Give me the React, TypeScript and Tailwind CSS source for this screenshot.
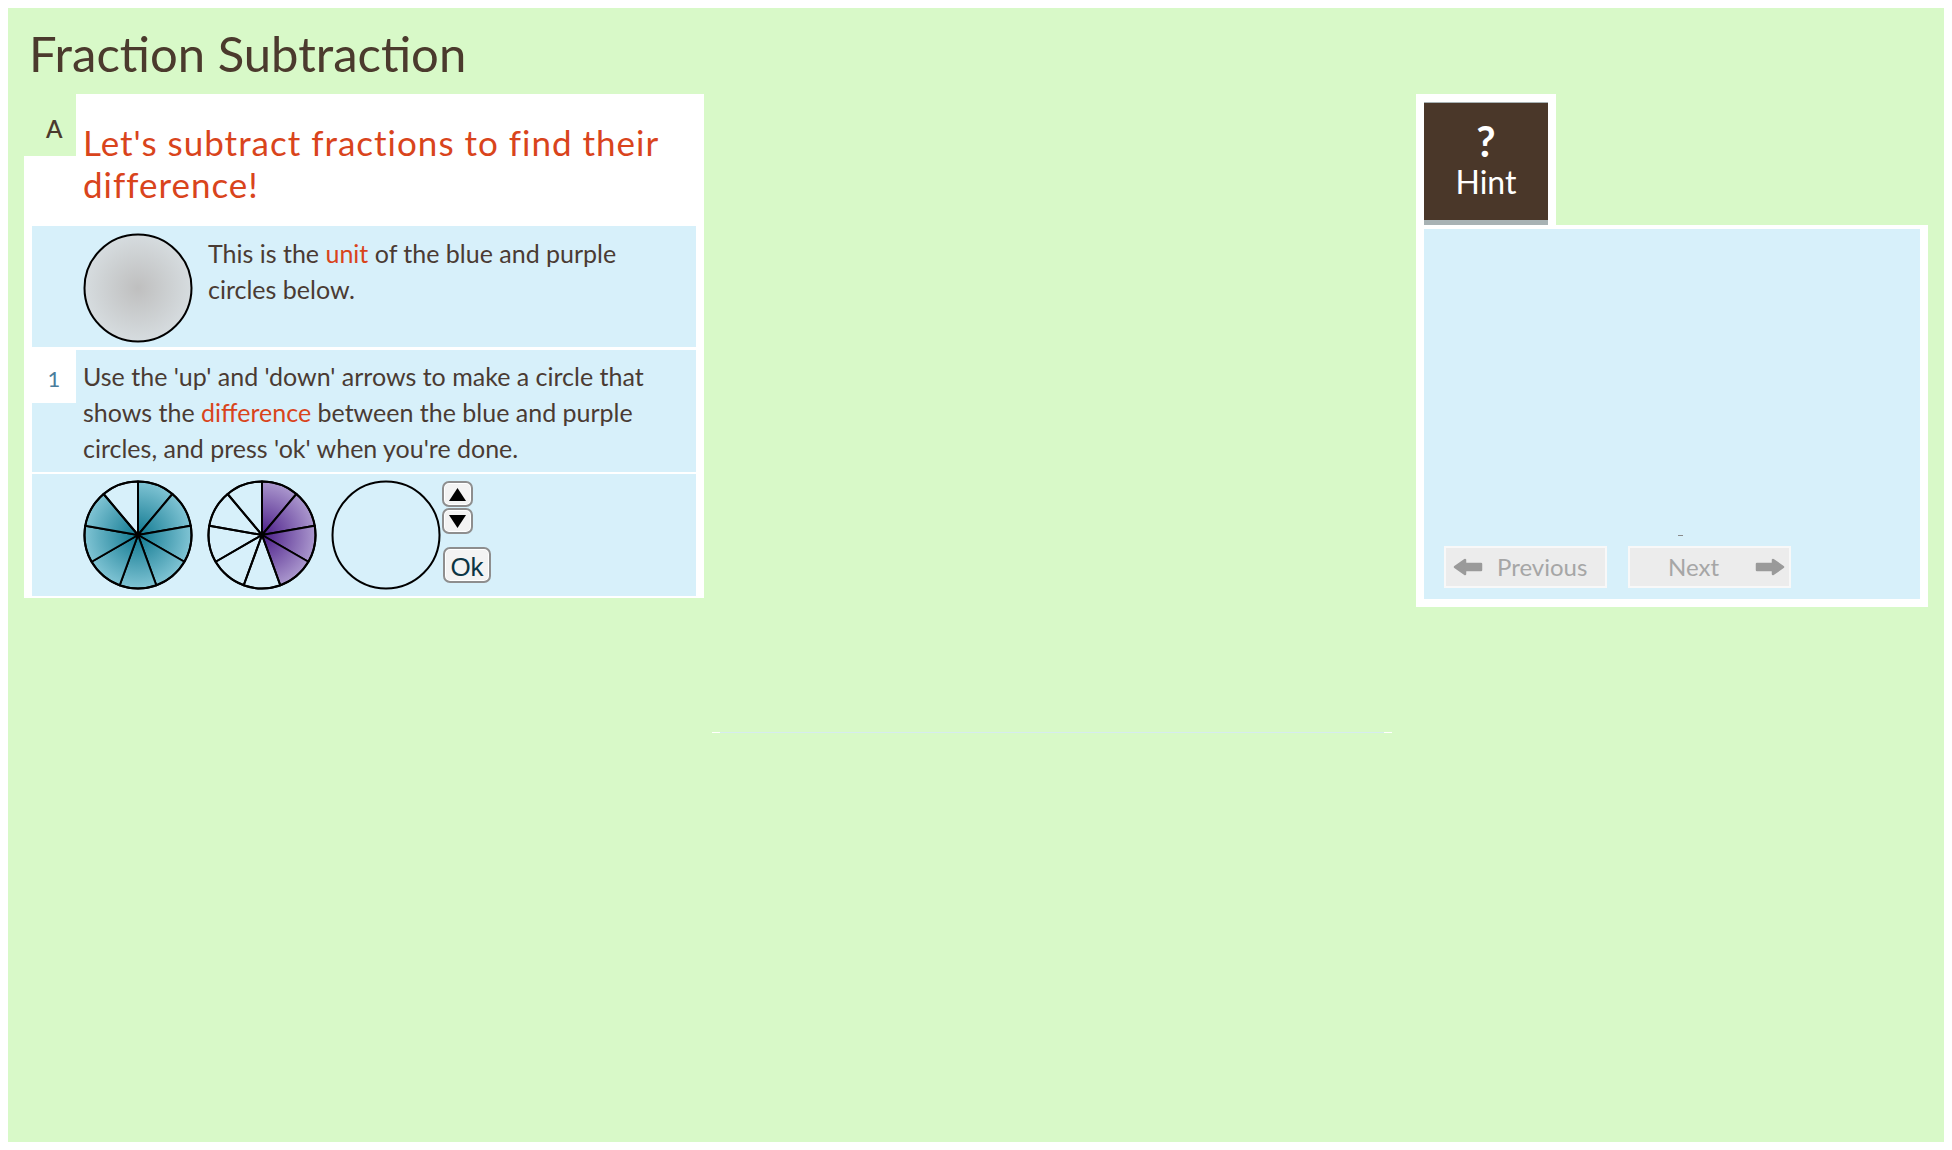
const font = { fontFamily: "Lato, 'Noto Sans', sans-serif" }

// one pie circle split into equal slices; the first `filled` slices (clockwise from top) are coloured
function Pie({ id, slices, filled, inner, outer }: { id: string; slices: number; filled: number; inner: string; outer: string }) {
  const c = 55
  const r = 53.5
  const pt = (k: number) => {
    const a = (k * 2 * Math.PI) / slices
    return [c + r * Math.sin(a), c - r * Math.cos(a)]
  }
  const wedges = []
  for (let k = 0; k < slices; k++) {
    const [x1, y1] = pt(k)
    const [x2, y2] = pt(k + 1)
    wedges.push(
      <path
        key={k}
        d={`M${c},${c} L${x1},${y1} A${r},${r} 0 0 1 ${x2},${y2} Z`}
        fill={k < filled ? `url(#${id})` : "none"}
        stroke="#000"
        strokeWidth={2}
        strokeLinejoin="round"
      />
    )
  }
  return (
    <svg width={110} height={110} viewBox="0 0 110 110" className="shrink-0">
      <defs>
        <radialGradient id={id} gradientUnits="userSpaceOnUse" cx={c} cy={c} r={r}>
          <stop offset="0%" stopColor={inner} />
          <stop offset="100%" stopColor={outer} />
        </radialGradient>
      </defs>
      {wedges}
      <circle cx={c} cy={c} r={r} fill="none" stroke="#000" strokeWidth={2} />
    </svg>
  )
}

function PlainCircle({ id, inner, outer }: { id?: string; inner?: string; outer?: string }) {
  return (
    <svg width={110} height={110} viewBox="0 0 110 110" className="shrink-0">
      {id && (
        <defs>
          <radialGradient id={id} gradientUnits="userSpaceOnUse" cx={55} cy={55} r={53.5}>
            <stop offset="0%" stopColor={inner} />
            <stop offset="100%" stopColor={outer} />
          </radialGradient>
        </defs>
      )}
      <circle cx={55} cy={55} r={53.5} fill={id ? `url(#${id})` : "none"} stroke="#000" strokeWidth={2} />
    </svg>
  )
}

function SpinButton({ up }: { up?: boolean }) {
  return (
    <button className="flex h-[26px] w-[31px] items-center justify-center rounded-[7px] border-2 border-[#8e8e8e] bg-[#f3f3f3] shadow-[inset_0_0_0_1px_#ffffff]">
      <svg width={17} height={13} viewBox="0 0 17 13">
        {up ? <polygon points="8.5,0 17,13 0,13" fill="#000" /> : <polygon points="0,0 17,0 8.5,13" fill="#000" />}
      </svg>
    </button>
  )
}

function NavArrow({ right }: { right?: boolean }) {
  return (
    <svg width={30} height={18} viewBox="0 0 30 18" className={right ? "shrink-0 -scale-x-100" : "shrink-0"}>
      <path
        d="M2,9 L12,2 L12,6 L28,6 L28,12 L12,12 L12,16 Z"
        fill="#9a9a9a"
        stroke="#9a9a9a"
        strokeWidth={2.5}
        strokeLinejoin="round"
      />
    </svg>
  )
}

export default function App() {
  return (
    <div className="min-h-screen bg-white p-2" style={font}>
      <div className="h-[1134px] bg-[#d8f9c8] px-4 pt-[21px]">
        <h1 className="ml-[5px] text-[49px] leading-[48px] text-[#4b3a2d]">Fraction Subtraction</h1>

        <div className="mt-[17px] flex items-start">
          {/* Left: problem card */}
          <div className="w-[680px]">
            <div className="flex">
              <div className="flex w-[52px] flex-col">
                <div className="h-[62px] pl-[22px] pt-[23px] text-[24px] font-semibold leading-[24px] text-[#4b3a2d]">A</div>
                <div className="flex-1 bg-white" />
              </div>
              <div className="flex-1 bg-white pb-[21px] pl-[7px] pr-4 pt-[27px] text-[35px] leading-[42px] tracking-[1px] text-[#d9441c]">
                Let's subtract fractions to find their difference!
              </div>
            </div>

            <div className="bg-white px-2 pb-[2px] text-[25px] leading-[36px] text-[#4a3b33]">
              <div className="flex h-[121px] bg-[#d7f0fa] pl-[51px] pt-[7px]">
                <PlainCircle id="unitGrad" inner="#bfbfbf" outer="#d6dcdf" />
                <p className="ml-[15px] mt-[2px] w-[450px]">
                  This is the <span className="text-[#d9441c]">unit</span> of the blue and purple circles below.
                </p>
              </div>

              <div className="mt-[3px] flex h-[122px] bg-[#d7f0fa]">
                <div className="w-[44px] shrink-0">
                  <div className="flex h-[53px] justify-center bg-white pt-[18px] text-[22px] leading-[22px] text-[#4a7d9c]">1</div>
                </div>
                <p className="w-[600px] pl-[7px] pt-[8px]">
                  Use the 'up' and 'down' arrows to make a circle that shows the{" "}
                  <span className="text-[#d9441c]">difference</span> between the blue and purple circles, and press 'ok' when you're done.
                </p>
              </div>

              <div className="mt-[2px] flex h-[122px] bg-[#d7f0fa] pl-[51px] pt-[6px]">
                <div className="flex gap-[14px]">
                  <Pie id="blueGrad" slices={9} filled={8} inner="#0f7890" outer="#80c4d4" />
                  <Pie id="purpleGrad" slices={9} filled={4} inner="#4a1c88" outer="#ab98ce" />
                  <PlainCircle />
                </div>
                <div className="ml-[1px] flex flex-col pt-px">
                  <SpinButton up />
                  <div className="mt-px">
                    <SpinButton />
                  </div>
                  <button
                    className="mt-[13px] ml-px flex h-[36px] w-[48px] items-center justify-center rounded-[7px] border-2 border-[#8e8e8e] bg-[#f3f3f3] pt-[3px] text-[26px] text-[#0c3544] shadow-[inset_0_0_0_1px_#ffffff]"
                    style={{ fontFamily: "'Liberation Sans', Arial, sans-serif" }}
                  >
                    Ok
                  </button>
                </div>
              </div>
            </div>
          </div>

          {/* Middle */}
          <div className="w-[712px]">
            <div className="ml-[8px] mt-[638px] flex h-px w-[680px]">
              <div className="w-[8px] bg-white" />
              <div className="flex-1 bg-[#d6ecef]" />
              <div className="w-[8px] bg-white" />
            </div>
          </div>

          {/* Right: hint panel */}
          <div className="w-[512px]">
            <div className="w-[140px] bg-white px-2 pt-2">
              <button className="flex h-[123px] w-full flex-col items-center border-t border-b-[5px] border-[#a8b2b4] bg-[#4a3729] text-white">
                <span className="mt-[17px] text-[42px] font-bold leading-[42px]">?</span>
                <span className="mt-[4px] text-[32px] leading-[32px]">Hint</span>
              </button>
            </div>
            <div className="flex h-[382px] flex-col justify-end border-x-8 border-b-8 border-t-4 border-white bg-[#d7f0fa] px-5 pb-[11px]">
              <div className="mb-[10px] ml-[234px] h-px w-[5px] bg-[#8a8a8a]" />
              <div className="flex gap-[21px] text-[24px] leading-[24px] text-[#a6a6a6]">
                <button className="flex h-[42px] w-[163px] items-center border-2 border-[#f8f8f8] bg-[#ececec] pl-[7px]">
                  <NavArrow />
                  <span className="ml-[14px]">Previous</span>
                </button>
                <button className="flex h-[42px] w-[163px] items-center border-2 border-[#f8f8f8] bg-[#ececec] pl-[38px]">
                  <span>Next</span>
                  <span className="ml-auto mr-[4px]">
                    <NavArrow right />
                  </span>
                </button>
              </div>
            </div>
          </div>
        </div>
      </div>
    </div>
  )
}
